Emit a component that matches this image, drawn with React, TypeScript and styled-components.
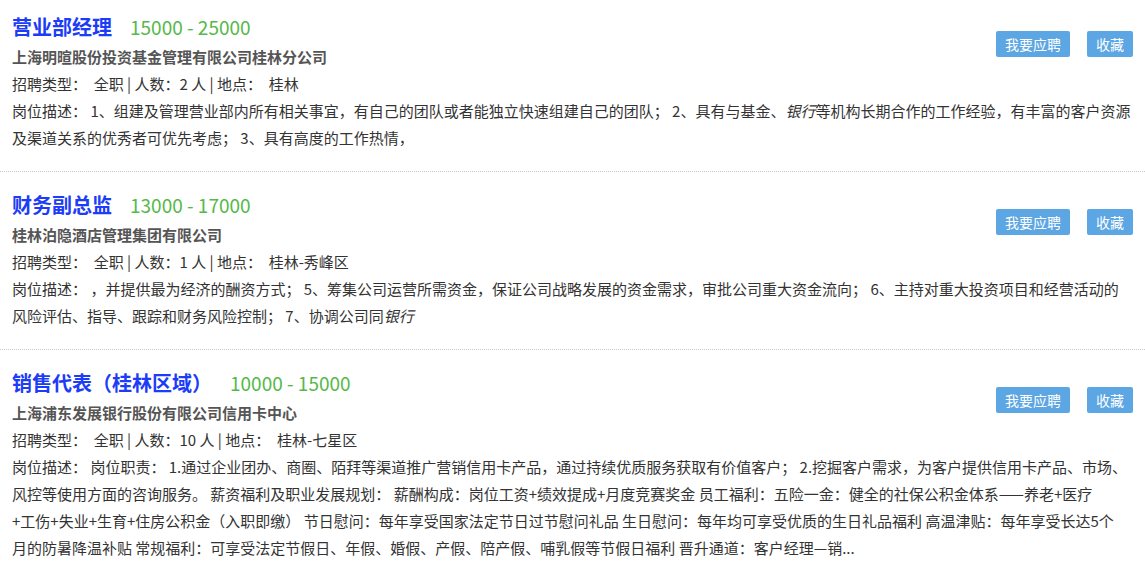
import React from "react";
import styled, { createGlobalStyle } from "styled-components";

const GlobalStyle = createGlobalStyle`
  body {
    margin: 0;
    background: #fff;
    font-family: "Noto Sans CJK SC", "Noto Sans", sans-serif;
    color: #333;
  }
`;

type Job = {
  title: string;
  salary: string;
  company: string;
  type: string;
  count: number;
  place: string;
  desc: React.ReactNode;
};

const jobs: Job[] = [
  {
    title: "营业部经理",
    salary: "15000 - 25000",
    company: "上海明暄股份投资基金管理有限公司桂林分公司",
    type: "全职",
    count: 2,
    place: "桂林",
    desc: (
      <>
        1、组建及管理营业部内所有相关事宜，有自己的团队或者能独立快速组建自己的团队； 2、具有与基金、<em>银行</em>
        等机构长期合作的工作经验，有丰富的客户资源及渠道关系的优秀者可优先考虑； 3、具有高度的工作热情，
      </>
    ),
  },
  {
    title: "财务副总监",
    salary: "13000 - 17000",
    company: "桂林泊隐酒店管理集团有限公司",
    type: "全职",
    count: 1,
    place: "桂林-秀峰区",
    desc: (
      <>
        ，并提供最为经济的酬资方式； 5、筹集公司运营所需资金，保证公司战略发展的资金需求，审批公司重大资金流向； 6、主持对重大投资项目和经营活动的风险评估、指导、跟踪和财务风险控制； 7、协调公司同<em>银行</em>
      </>
    ),
  },
  {
    title: "销售代表（桂林区域）",
    salary: "10000 - 15000",
    company: "上海浦东发展银行股份有限公司信用卡中心",
    type: "全职",
    count: 10,
    place: "桂林-七星区",
    desc: (
      <>
        岗位职责： 1.通过企业团办、商圈、陌拜等渠道推广营销信用卡产品，通过持续优质服务获取有价值客户； 2.挖掘客户需求，为客户提供信用卡产品、市场、风控等使用方面的咨询服务。 薪资福利及职业发展规划： 薪酬构成：岗位工资+绩效提成+月度竞赛奖金 员工福利：五险一金：健全的社保公积金体系——养老+医疗
        <br />
        +工伤+失业+生育+住房公积金（入职即缴） 节日慰问：每年享受国家法定节日过节慰问礼品 生日慰问：每年均可享受优质的生日礼品福利 高温津贴：每年享受长达5个
        <br />
        月的防暑降温补贴 常规福利：可享受法定节假日、年假、婚假、产假、陪产假、哺乳假等节假日福利 晋升通道：客户经理—销...
      </>
    ),
  },
];

const List = styled.div`
  display: flex;
  flex-direction: column;
`;

const Card = styled.div`
  display: grid;
  grid-template-columns: 1fr auto;
  padding: 17px 14px 20px 12px;
  border-bottom: 1px dotted #c8c8c8;

  &:first-child {
    padding-top: 11px;
  }

  &:last-child {
    border-bottom: none;
  }
`;

const TitleRow = styled.div`
  display: flex;
  align-items: baseline;
  height: 32px;
  line-height: 32px;
`;

const Title = styled.a`
  font-size: 20px;
  font-weight: bold;
  color: #1c3cf7;
  text-decoration: none;
`;

const Salary = styled.span`
  margin-left: 18px;
  font-size: 19px;
  color: #55b94a;
`;

const Company = styled.div`
  font-size: 15px;
  font-weight: bold;
  color: #555;
  line-height: 27px;
`;

const Meta = styled.div`
  font-size: 15px;
  line-height: 27px;
  color: #333;
  white-space: pre;
`;

const Desc = styled.div`
  grid-column: 1 / -1;
  font-size: 15px;
  line-height: 27px;
  color: #333;

  em {
    font-style: italic;
  }
`;

const Actions = styled.div`
  grid-column: 2;
  grid-row: 1 / 4;
  display: flex;
  gap: 17px;
  margin-top: 20px;
  margin-right: -2px;
  align-self: start;
`;

const Button = styled.button`
  height: 26px;
  padding: 0 9px;
  border: none;
  border-radius: 2px;
  background: #5ca6e3;
  color: #fff;
  font-family: inherit;
  font-size: 14px;
  line-height: 26px;
  cursor: pointer;
`;

const Info = styled.div`
  grid-column: 1;
`;

export default function App() {
  return (
    <>
      <GlobalStyle />
      <List>
        {jobs.map((job) => (
          <Card key={job.title}>
            <Info>
              <TitleRow>
                <Title href="#">{job.title}</Title>
                <Salary>{job.salary}</Salary>
              </TitleRow>
              <Company>{job.company}</Company>
              <Meta>{`招聘类型：  ${job.type} | 人数：${job.count} 人 | 地点：  ${job.place}`}</Meta>
            </Info>
            <Actions>
              <Button>我要应聘</Button>
              <Button>收藏</Button>
            </Actions>
            <Desc>岗位描述： {job.desc}</Desc>
          </Card>
        ))}
      </List>
    </>
  );
}
